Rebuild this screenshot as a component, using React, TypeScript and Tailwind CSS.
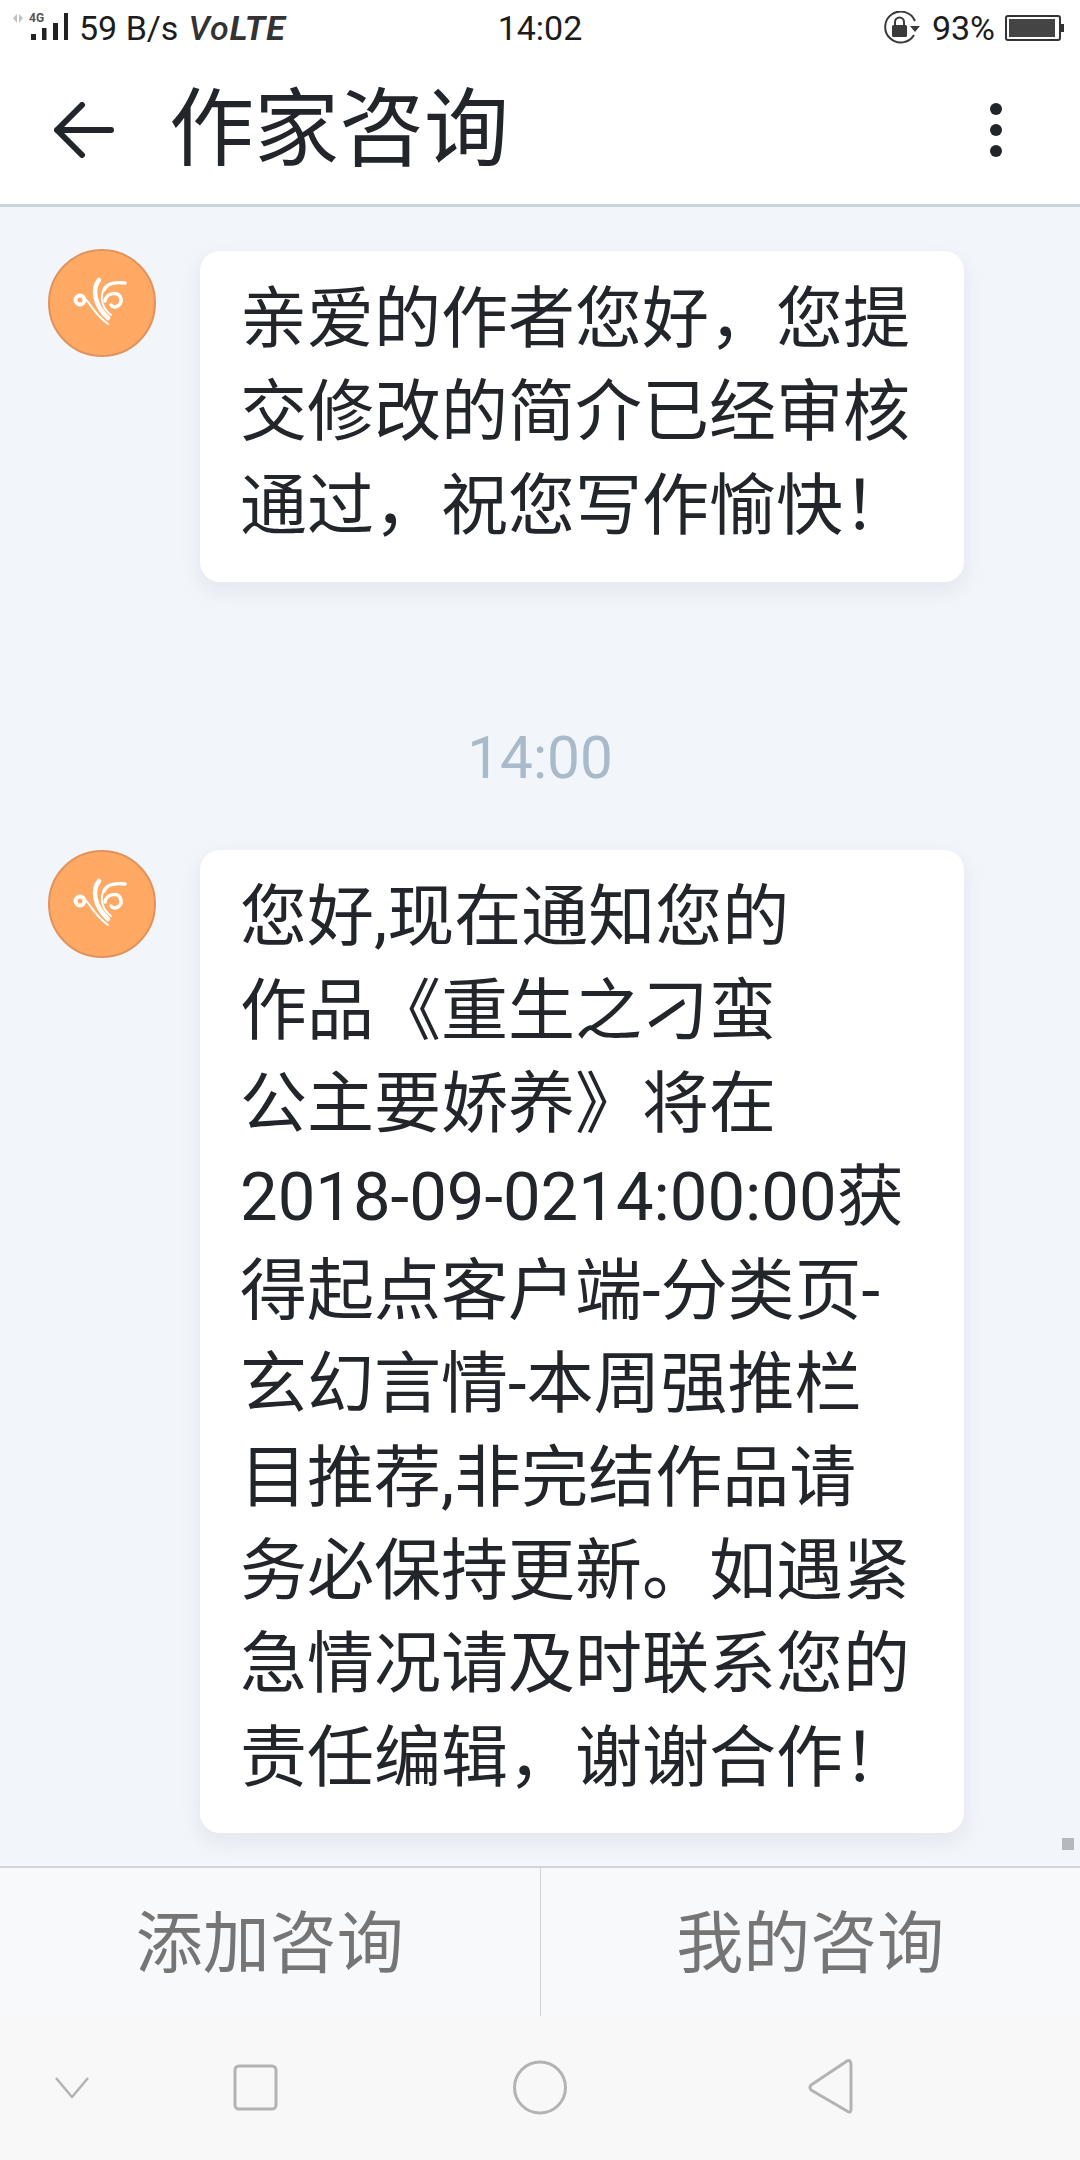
import React from 'react';

const FONT = '[font-family:Roboto,"Noto_Sans_CJK_SC",sans-serif]';

const firstMessage = ['亲爱的作者您好，您提', '交修改的简介已经审核', '通过，祝您写作愉快！'];
const secondMessage = [
  '您好,现在通知您的',
  '作品《重生之刁蛮',
  '公主要娇养》将在',
  '2018-09-0214:00:00获',
  '得起点客户端-分类页-',
  '玄幻言情-本周强推栏',
  '目推荐,非完结作品请',
  '务必保持更新。如遇紧',
  '急情况请及时联系您的',
  '责任编辑，谢谢合作！',
];

const Avatar = () => (
  <div className="w-[108px] h-[108px] rounded-full shrink-0 bg-[#ffa964] border-2 border-[#e2925a] flex items-center justify-center">
    <svg width="60" height="60" viewBox="0 0 60 60" fill="none" stroke="#fff" strokeLinecap="round">
      <circle cx="8" cy="27" r="4.5" strokeWidth="4" />
      <path d="M13 26c5 3 8 14 23 25" strokeWidth="2" />
      <path d="M27 7c-7 9-5 25 9 38" strokeWidth="4.5" />
      <path d="M32 17c3-7 13-8 21-7" strokeWidth="3.5" />
      <path d="M33 28c1-8 14-11 16-2 1 7-7 10-10 6" strokeWidth="3.5" />
      <path d="M31 18c-3 9 0 18 8 24" strokeWidth="2" />
    </svg>
  </div>
);

const Bubble = ({ lines, className }: { lines: string[]; className: string }) => (
  <div className={`w-[764px] bg-white rounded-[20px] shadow-[0_8px_20px_rgba(150,165,185,0.18)] pl-[40px] ${className}`}>
    {lines.map((line, i) => (
      <div key={i} className="text-[67px] leading-[93.4px] text-[#22252a] whitespace-nowrap">
        {line}
      </div>
    ))}
  </div>
);

const StatusBar = () => (
  <div className="h-[56px] flex items-center justify-between pl-[12px] pr-[16px] relative text-[#1c1c1c]">
    <div className="flex items-center">
      <svg width="56" height="32" viewBox="0 0 56 32">
        <path d="M1 6l4-4v9zM7 2l4 4-4 5z" fill="#c2c2c2" />
        <text x="17" y="10" fontSize="12" fontWeight="700" fill="#555" fontFamily="Roboto">4G</text>
        <rect x="19" y="22" width="5" height="6" fill="#222" />
        <rect x="30" y="16" width="4.5" height="12" fill="#222" />
        <rect x="41" y="11" width="5" height="17" fill="#222" />
        <rect x="52" y="1" width="4" height="27" fill="#222" />
      </svg>
      <span className="text-[34px] leading-none ml-[11px]">59 B/s</span>
      <span className="text-[34px] leading-none italic font-bold ml-[10px] text-[#333] tracking-[1px]">
        <span className="font-medium">Vo</span>LTE
      </span>
    </div>
    <div className="absolute left-0 right-0 top-[12px] text-center text-[34px] leading-[32px] pointer-events-none">14:02</div>
    <div className="flex items-center">
      <svg width="38" height="34" viewBox="0 0 38 34" fill="none">
        <path d="M32 10A15.5 15.5 0 1 0 31 24" stroke="#3a3a3a" strokeWidth="2" />
        <path d="M27 15h10l-5 6z" fill="#3a3a3a" />
        <rect x="9" y="14" width="15" height="12" rx="1.5" fill="#3a3a3a" />
        <path d="M12 14v-3a4.5 4.5 0 0 1 9 0v3" stroke="#3a3a3a" strokeWidth="2" />
      </svg>
      <span className="text-[34px] leading-none ml-[11px]">93%</span>
      <div className="ml-[10px] w-[56px] h-[26px] border-2 border-[#333] rounded-[3px] p-[2px]">
        <div className="h-full w-[46px] bg-[#444]" />
      </div>
      <div className="w-[3px] h-[8px] bg-[#333]" />
    </div>
  </div>
);

export default function App() {
  return (
    <div className={`w-[1080px] h-[2160px] flex flex-col bg-[#f2f5fa] relative overflow-hidden ${FONT}`}>
      <div className="bg-white border-b-[3px] border-[#ccd4de]">
        <StatusBar />
        <div className="h-[148px] flex items-center pl-[54px] pr-[78px]">
          <svg width="60" height="56" viewBox="0 0 60 56" fill="none" stroke="#22252a" strokeWidth="6" strokeLinecap="round" strokeLinejoin="round">
            <path d="M28 3L3 28l25 25M3 28h54" />
          </svg>
          <div className="ml-[55px] text-[85px] leading-none text-[#22252a]">作家咨询</div>
          <div className="ml-auto flex flex-col gap-[9px]">
            <div className="w-[12px] h-[12px] rounded-full bg-[#22252a]" />
            <div className="w-[12px] h-[12px] rounded-full bg-[#22252a]" />
            <div className="w-[12px] h-[12px] rounded-full bg-[#22252a]" />
          </div>
        </div>
      </div>

      <div className="flex-1 min-h-0 relative px-[48px] pt-[42px]">
        <div className="flex gap-[44px] items-start">
          <Avatar />
          <Bubble lines={firstMessage} className="mt-[2px] pt-[22px] pb-[29px]" />
        </div>
        <div className="text-center text-[58.5px] leading-[64px] text-[#a9bacb] mt-[144px] mb-[60px]">14:00</div>
        <div className="flex gap-[44px] items-start">
          <Avatar />
          <Bubble lines={secondMessage} className="pt-[21px] pb-[28px]" />
        </div>
        <div className="absolute right-[6px] bottom-[16px] w-[12px] h-[12px] bg-[#b5b9bd]" />
      </div>

      <div className="h-[150px] bg-[#f8f9fb] border-t-[2px] border-[#d2d4d8] flex">
        <div className="flex-1 flex items-center justify-center pt-[5px] text-[67px] text-[#757575] border-r border-[#cfd1d4]">添加咨询</div>
        <div className="flex-1 flex items-center justify-center pt-[5px] text-[67px] text-[#757575]">我的咨询</div>
      </div>

      <div className="h-[144px] bg-[#f8f8f8]">
        <svg width="1080" height="144" viewBox="0 0 1080 144" fill="none" stroke="#b3b3b3" strokeLinejoin="round">
          <path d="M56 62l16 19 16-19" strokeWidth="2.5" />
          <rect x="235" y="50" width="41" height="43" rx="4" strokeWidth="3" />
          <circle cx="540" cy="71.5" r="25.5" strokeWidth="3" />
          <path d="M851 50v43q0 5-4 2L811 74q-2-3 0-5l36-24q4-2 4 5z" strokeWidth="3" />
        </svg>
      </div>
    </div>
  );
}
